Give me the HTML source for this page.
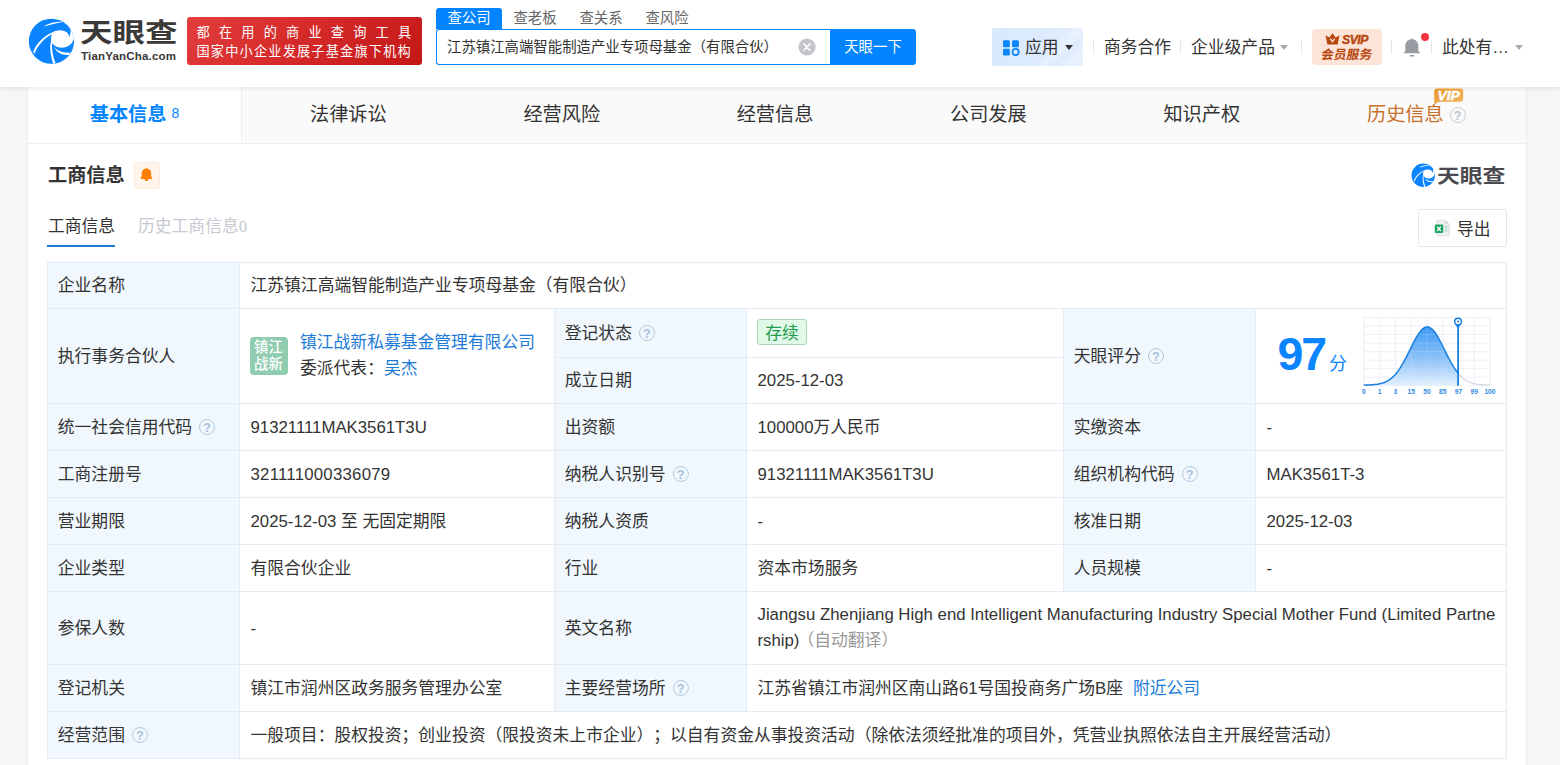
<!DOCTYPE html>
<html lang="zh-CN">
<head>
<meta charset="utf-8">
<title>天眼查</title>
<style>
*{box-sizing:border-box;margin:0;padding:0}
html,body{width:1560px;height:765px;overflow:hidden;background:#f6f6f6}
body{text-spacing-trim:space-all;font-family:"Liberation Sans","Noto Sans CJK SC",sans-serif;color:#333;font-size:16.8px;position:relative}
.abs{position:absolute;white-space:nowrap}
a{color:#1c7bd9;text-decoration:none}
/* header */
#hd{position:absolute;left:0;top:0;width:1560px;height:87px;background:#fff;box-shadow:0 1px 6px rgba(0,0,0,.10);z-index:5}
#logo-t{left:79.5px;top:13px;font-size:26px;line-height:40px;font-weight:700;color:#3b3838;transform:scaleX(1.25);transform-origin:0 0}
#logo-s{left:81px;top:48.5px;font-size:11.5px;line-height:14px;font-weight:700;color:#3b3838;letter-spacing:.2px}
#banner{left:187px;top:17px;width:235px;height:48px;border-radius:3px;background:linear-gradient(135deg,#e23d3d 0%,#d62b2b 45%,#c41818 100%);color:#fff;font-size:14.4px}
#banner div{position:absolute;left:9.5px;white-space:nowrap;line-height:20px}
.stab{top:8px;width:66px;height:21px;line-height:21.4px;font-size:14.4px;color:#666;text-align:center}
.stab.on{background:#0084ff;color:#fff;border-radius:3px 3px 0 0}
#sbox{left:436px;top:29px;width:395px;height:36px;border:1px solid #0084ff;border-right:0;border-radius:3px 0 0 3px;background:#fff}
#stext{left:447px;top:29px;line-height:36px;font-size:14.4px;color:#333}
#sbtn{left:830px;top:29px;width:86px;height:36px;background:#0084ff;color:#fff;border-radius:0 3px 3px 0;font-size:14.4px;line-height:36px;text-align:center}
.nav{top:30.2px;line-height:36px;font-size:16.8px;color:#333}
.sep{top:40px;width:1px;height:14px;background:#e6e6e6}
.tri{width:0;height:0;border-left:4px solid transparent;border-right:4px solid transparent;border-top:5px solid #333;top:45px}
/* tabs */
#wrap{left:27px;top:87px;width:1500px;height:700px;background:#fff;border-left:1px solid #ebebeb;border-right:1px solid #ebebeb}
#tabs{left:28px;top:87px;width:1498px;height:57px;background:#fafafa;border-bottom:1px solid #eee}
.tab{top:87px;width:213.33px;height:56px;line-height:56.4px;text-align:center;font-size:19.2px;color:#333}
.tab.on{background:#fff;color:#0084ff;font-weight:700;border-right:1px solid #eee;height:56px;width:214px}
/* table */
.c{line-height:24px;padding-top:1.8px;position:absolute;border-right:1px solid #e3ecf4;border-bottom:1px solid #e3ecf4;font-size:16.8px;color:#333;white-space:nowrap;padding-left:10.5px;display:flex;align-items:center}
.c.l{background:#f0f7fd;padding-left:9.8px}
.q{display:inline-block;width:16px;height:16px;border:1.5px solid #b5cce1;border-radius:50%;color:#a6c2db;font-size:12.6px;line-height:16.2px;text-align:center;margin-left:7px;font-family:"Liberation Sans",sans-serif;flex:none;position:relative;top:-1.2px;font-weight:700;overflow:hidden}
</style>
</head>
<body>
<div id="hd">
  <svg class="abs" style="left:24px;top:12px" width="60" height="60" viewBox="0 0 60 60">
    <defs><clipPath id="lc"><circle cx="27.45" cy="29.25" r="22.6"/></clipPath></defs>
    <circle cx="27.45" cy="29.25" r="22.6" fill="#0a84ff"/>
    <g clip-path="url(#lc)" fill="#fff">
      <path d="M28.6 20.5C32 17.6 40 17 43.5 21C44.8 22.6 45.3 24 45.1 25.2C46.3 23 46.9 20 46.3 17L53 15L53 27L49.8 27C48.5 32 43 36 37.6 35.7C33 35.5 29 33 27.1 29.4C26.8 26 27.3 23 28.6 20.5Z"/>
      <path d="M19.8 14.6C23 11.8 32 9.2 39.8 10C33 10.9 26 12.8 19.8 14.6Z"/>
      <path d="M9.1 40.2C12 32 19.5 24 28.8 20.3L29.2 21.4C20.5 25.6 13.5 33.5 10.4 41.8Z"/>
      <path d="M27 29.2C25.2 36 26.8 44.5 29.4 52L31.6 51.2C28.6 43.5 27.4 36 28.3 30.8Z"/>
      <path d="M29.9 34.2C32.5 38.6 39 41.2 46.6 40.6L45 42.9C38 43.4 32 40.5 29.9 34.2Z"/>
    </g>
  </svg>
  <div class="abs" id="logo-t">天眼查</div>
  <div class="abs" id="logo-s">TianYanCha.com</div>
  <div class="abs" id="banner">
    <div style="top:5.9px;letter-spacing:9.2px;font-size:13.2px">都在用的商业查询工具</div>
    <div style="top:24.6px;letter-spacing:1.17px;font-size:13.2px">国家中小企业发展子基金旗下机构</div>
  </div>
  <div class="abs stab on" style="left:436px">查公司</div>
  <div class="abs stab" style="left:502px">查老板</div>
  <div class="abs stab" style="left:568px">查关系</div>
  <div class="abs stab" style="left:634px">查风险</div>
  <div class="abs" id="sbox"></div>
  <div class="abs" id="stext">江苏镇江高端智能制造产业专项母基金（有限合伙）</div>
  <svg class="abs" style="left:798px;top:38px" width="18" height="18" viewBox="0 0 18 18"><circle cx="9" cy="9" r="8.6" fill="#c3c5cb"/><path d="M5.8 5.8L12.2 12.2M12.2 5.8L5.8 12.2" stroke="#fff" stroke-width="1.5" stroke-linecap="round"/></svg>
  <div class="abs" id="sbtn">天眼一下</div>

  <div class="abs" style="left:992px;top:28px;width:91px;height:38px;border-radius:2.5px;background:linear-gradient(135deg,rgba(255,255,255,0) 58%,rgba(255,255,255,.28) 70%,rgba(215,228,250,.25) 78%,rgba(255,255,255,.3) 88%,rgba(225,235,252,.2) 100%),linear-gradient(100deg,#d9e9fd 0%,#dcebfd 55%,#e3eefe 100%)"></div>
  <svg class="abs" style="left:1002.8px;top:39.5px" width="17" height="16" viewBox="0 0 17 16"><rect x="0" y="0.2" width="6.8" height="7" rx="1.3" fill="#0a84ff"/><rect x="9.1" y="0.2" width="6.8" height="7" rx="1.3" fill="#0a84ff"/><rect x="0" y="8.7" width="6.8" height="6.8" rx="1.3" fill="#0a84ff"/><circle cx="12.6" cy="12" r="3.1" fill="none" stroke="#0a84ff" stroke-width="1.7"/></svg>
  <div class="abs nav" style="left:1025px">应用</div>
  <div class="abs tri" style="left:1065px"></div>
  <div class="abs sep" style="left:1093px"></div>
  <div class="abs nav" style="left:1104px">商务合作</div>
  <div class="abs sep" style="left:1180px"></div>
  <div class="abs nav" style="left:1191px">企业级产品</div>
  <div class="abs tri" style="left:1280px;border-top-color:#aaa"></div>
  <div class="abs sep" style="left:1301px"></div>
  <div class="abs" style="left:1312px;top:29px;width:69.5px;height:36px;border-radius:4px;background:#fde4d8"></div>
  <svg class="abs" style="left:1325px;top:33px" width="15" height="12" viewBox="0 0 15 12"><path d="M0.5 2.2L4.2 4.6L7.5 0.3L10.8 4.6L14.5 2.2L12.6 11.5H2.4Z" fill="#b8470f"/><path d="M5.3 5.6L7.5 8.6L9.7 5.6" stroke="#fde3d6" stroke-width="1.3" fill="none"/></svg>
  <div class="abs" style="left:1342px;top:32.6px;font-size:12.2px;line-height:14px;font-weight:700;font-style:italic;color:#b8470f;letter-spacing:-.5px;-webkit-text-stroke:.45px #b8470f">SVIP</div>
  <div class="abs" style="left:1320.5px;top:47.6px;font-size:12.6px;line-height:15px;font-weight:700;color:#b8470f;letter-spacing:.2px;transform:skewX(-10deg)">会员服务</div>
  <div class="abs sep" style="left:1391px"></div>
  <svg class="abs" style="left:1402px;top:36px" width="20" height="22" viewBox="0 0 20 22"><path d="M9.8 1.8L10.5 3.2C14 3.6 16.3 6.3 16.3 9.8V15.4L18 15.9V17.3H1.9V15.9L3.3 15.4V9.8C3.3 6.3 5.6 3.6 9.1 3.2Z" fill="#989ba1"/><rect x="7.5" y="19.1" width="4.7" height="1.5" rx=".5" fill="#989ba1"/></svg>
  <div class="abs" style="left:1421px;top:33px;width:8px;height:8px;border-radius:50%;background:#f5333f"></div>
  <div class="abs sep" style="left:1431px"></div>
  <div class="abs nav" style="left:1442px">此处有…</div>
  <div class="abs tri" style="left:1515px;border-top-color:#aaa"></div>
</div>

<div class="abs" id="wrap"></div>
<div class="abs" id="tabs"></div>
<div class="abs tab on" style="left:28px">基本信息<span style="font-size:14px;font-weight:400;margin-left:5px;position:relative;top:-2.6px">8</span></div>
<div class="abs tab" style="left:241.7px">法律诉讼</div>
<div class="abs tab" style="left:455.1px">经营风险</div>
<div class="abs tab" style="left:668.4px">经营信息</div>
<div class="abs tab" style="left:881.7px">公司发展</div>
<div class="abs tab" style="left:1095.1px">知识产权</div>
<div class="abs tab" style="left:1312px;color:#c8702a;text-align:left;padding-left:55px">历史信息</div>

<svg class="abs" style="left:1433px;top:87px;z-index:6" width="32" height="20" viewBox="0 0 32 20">
  <defs><linearGradient id="vg" x1="0" y1="0" x2="1" y2="1"><stop offset="0" stop-color="#e8962e"/><stop offset="1" stop-color="#f2b865"/></linearGradient></defs>
  <path d="M4.2 1.6H27.2Q30.2 1.6 30.2 4.6V11.8Q30.2 14.8 27.2 14.8H6.5C4.5 15 2.4 16.5 1.2 18.6V4.6Q1.2 1.6 4.2 1.6Z" fill="url(#vg)"/>
  <text x="15.6" y="13" text-anchor="middle" font-family="Liberation Sans,sans-serif" font-size="13.2" font-weight="700" font-style="italic" fill="#fff" stroke="#fff" stroke-width=".5" textLength="22" lengthAdjust="spacingAndGlyphs">VIP</text>
</svg>
<div class="abs" style="left:1449.5px;top:106.8px;width:16px;height:16px;border:1.5px solid #c6cdd4;border-radius:50%;color:#bcc5ce;font-size:12.6px;line-height:16.2px;text-align:center;font-weight:700;font-family:'Liberation Sans',sans-serif;overflow:hidden">?</div>

<!-- section head -->
<div class="abs" style="left:48px;top:163px;font-size:19.2px;line-height:26px;font-weight:700;color:#333">工商信息</div>
<div class="abs" style="left:134px;top:162px;width:26px;height:27px;border:1px solid #fcead9;border-radius:3px;background:#fff5ec"></div>
<svg class="abs" style="left:136px;top:164px" width="20" height="20" viewBox="0 0 20 20"><path d="M10.45 3.5L10.95 4.5C13.6 4.9 15.2 7 15.2 9.6V12.6L16.3 14V14.9H4.6V14L5.7 12.6V9.6C5.7 7 7.3 4.9 9.95 4.5ZM8.5 14.8H12.4C12.3 16.3 11.4 17.1 10.45 17.1C9.5 17.1 8.6 16.3 8.5 14.8Z" fill="#ff8000"/></svg>

<svg class="abs" style="left:1408.5px;top:159.9px" width="31.2" height="31.2" viewBox="0 0 60 60">
  <circle cx="27.45" cy="29.25" r="22.6" fill="#0a84ff"/>
  <g clip-path="url(#lc)" fill="#fff">
    <path d="M28.6 20.5C32 17.6 40 17 43.5 21C44.8 22.6 45.3 24 45.1 25.2C46.3 23 46.9 20 46.3 17L53 15L53 27L49.8 27C48.5 32 43 36 37.6 35.7C33 35.5 29 33 27.1 29.4C26.8 26 27.3 23 28.6 20.5Z"/>
    <path d="M19.8 14.6C23 11.8 32 9.2 39.8 10C33 10.9 26 12.8 19.8 14.6Z"/>
    <path d="M9.1 40.2C12 32 19.5 24 28.8 20.3L29.2 21.4C20.5 25.6 13.5 33.5 10.4 41.8Z"/>
    <path d="M27 29.2C25.2 36 26.8 44.5 29.4 52L31.6 51.2C28.6 43.5 27.4 36 28.3 30.8Z"/>
    <path d="M29.9 34.2C32.5 38.6 39 41.2 46.6 40.6L45 42.9C38 43.4 32 40.5 29.9 34.2Z"/>
  </g>
</svg>
<div class="abs" style="left:1437px;top:161.8px;font-size:19px;line-height:30px;font-weight:700;color:#4a4a4f;transform:scaleX(1.2);transform-origin:0 0">天眼查</div>

<div class="abs" style="left:48px;top:215.3px;font-size:16.8px;line-height:24px;color:#333">工商信息</div>
<div class="abs" style="left:47px;top:244.6px;width:68px;height:2.4px;background:#1f7acc"></div>
<div class="abs" style="left:138px;top:215.3px;font-size:16.8px;line-height:24px;color:#c6c9d1">历史工商信息<span style="font-family:'Liberation Serif',serif">0</span></div>

<div class="abs" style="left:1418px;top:209px;width:89px;height:38px;border:1px solid #e6e6e6;border-radius:3px;background:#fff"></div>
<svg class="abs" style="left:1434px;top:219px" width="17" height="18" viewBox="0 0 17 18">
  <path d="M4 1.2H11.2L15.2 5.2V15.8Q15.2 16.8 14.2 16.8H4Q3 16.8 3 15.8V2.2Q3 1.2 4 1.2Z" fill="#eef0f2" stroke="#d4d8dc" stroke-width=".8"/>
  <path d="M11.2 1.2V5.2H15.2Z" fill="#d4d8dc"/>
  <rect x="0.8" y="5.6" width="8.4" height="8.4" rx="1" fill="#21a366"/>
  <path d="M3.2 7.6L6.8 12M6.8 7.6L3.2 12" stroke="#fff" stroke-width="1.3"/>
  <path d="M10.6 7.6H13.4M10.6 9.8H13.4M10.6 12H13.4" stroke="#9fd8b9" stroke-width="1"/>
</svg>
<div class="abs" style="left:1457px;top:218.3px;font-size:16.8px;line-height:24px;color:#333">导出</div>

<!-- table -->
<div id="tb" class="abs" style="left:47px;top:262px;width:1460px;height:497px;border-left:1px solid #e3ecf4;border-top:1px solid #e3ecf4"></div>
<div class="c l" style="left:48px;top:263px;width:192px;height:46px;">企业名称</div>
<div class="c" style="left:240px;top:263px;width:1267px;height:46px;">江苏镇江高端智能制造产业专项母基金（有限合伙）</div>
<div class="c l" style="left:48px;top:309px;width:192px;height:95px;">执行事务合伙人</div>
<div class="c" style="left:240px;top:309px;width:315px;height:95px;"><div style="width:38px;height:38px;border-radius:4px;background:#8fccb0;color:#fff;font-size:14.4px;line-height:16.5px;text-align:center;padding-top:2.5px;flex:none;position:relative;left:-1px;top:-1.4px;font-weight:500">镇江<br>战新</div><div style="margin-left:11.5px;line-height:26px;position:relative;top:-.6px"><a>镇江战新私募基金管理有限公司</a><br>委派代表：<a>吴杰</a></div></div>
<div class="c l" style="left:555px;top:309px;width:192px;height:49px;">登记状态<span class="q">?</span></div>
<div class="c" style="left:747px;top:309px;width:317px;height:49px;"><span style="display:inline-block;border:1px solid #a9d7b8;background:#e1f9e8;color:#1e9a4e;border-radius:3px;padding:1.5px 7.3px 0 7.7px;line-height:23px;height:26px;position:relative;top:-1.9px;left:-1px">存续</span></div>
<div class="c l" style="left:555px;top:358px;width:192px;height:46px;">成立日期</div>
<div class="c" style="left:747px;top:358px;width:317px;height:46px;">2025-12-03</div>
<div class="c l" style="left:1064px;top:309px;width:192px;height:95px;">天眼评分<span class="q">?</span></div>
<div class="c" style="left:1256px;top:309px;width:251px;height:95px;"><span id="score"></span></div>
<div class="c l" style="left:48px;top:404px;width:192px;height:47px;">统一社会信用代码<span class="q">?</span></div>
<div class="c" style="left:240px;top:404px;width:315px;height:47px;">91321111MAK3561T3U</div>
<div class="c l" style="left:555px;top:404px;width:192px;height:47px;">出资额</div>
<div class="c" style="left:747px;top:404px;width:317px;height:47px;">100000万人民币</div>
<div class="c l" style="left:1064px;top:404px;width:192px;height:47px;">实缴资本</div>
<div class="c" style="left:1256px;top:404px;width:251px;height:47px;">-</div>
<div class="c l" style="left:48px;top:451px;width:192px;height:47px;">工商注册号</div>
<div class="c" style="left:240px;top:451px;width:315px;height:47px;"><span style="letter-spacing:.24px">321111000336079</span></div>
<div class="c l" style="left:555px;top:451px;width:192px;height:47px;">纳税人识别号<span class="q">?</span></div>
<div class="c" style="left:747px;top:451px;width:317px;height:47px;">91321111MAK3561T3U</div>
<div class="c l" style="left:1064px;top:451px;width:192px;height:47px;">组织机构代码<span class="q">?</span></div>
<div class="c" style="left:1256px;top:451px;width:251px;height:47px;">MAK3561T-3</div>
<div class="c l" style="left:48px;top:498px;width:192px;height:47px;">营业期限</div>
<div class="c" style="left:240px;top:498px;width:315px;height:47px;">2025-12-03 至 无固定期限</div>
<div class="c l" style="left:555px;top:498px;width:192px;height:47px;">纳税人资质</div>
<div class="c" style="left:747px;top:498px;width:317px;height:47px;">-</div>
<div class="c l" style="left:1064px;top:498px;width:192px;height:47px;">核准日期</div>
<div class="c" style="left:1256px;top:498px;width:251px;height:47px;">2025-12-03</div>
<div class="c l" style="left:48px;top:545px;width:192px;height:47px;">企业类型</div>
<div class="c" style="left:240px;top:545px;width:315px;height:47px;">有限合伙企业</div>
<div class="c l" style="left:555px;top:545px;width:192px;height:47px;">行业</div>
<div class="c" style="left:747px;top:545px;width:317px;height:47px;">资本市场服务</div>
<div class="c l" style="left:1064px;top:545px;width:192px;height:47px;">人员规模</div>
<div class="c" style="left:1256px;top:545px;width:251px;height:47px;">-</div>
<div class="c l" style="left:48px;top:592px;width:192px;height:73px;">参保人数</div>
<div class="c" style="left:240px;top:592px;width:315px;height:73px;">-</div>
<div class="c l" style="left:555px;top:592px;width:192px;height:73px;">英文名称</div>
<div class="c" style="left:747px;top:592px;width:760px;height:73px;"><div style="white-space:normal;word-break:break-all;line-height:25.8px;width:742px;position:relative;top:-.8px">Jiangsu Zhenjiang High end Intelligent Manufacturing Industry Special Mother Fund (Limited Partnership)<span style="color:#999;margin-left:-2px">（自动翻译）</span></div></div>
<div class="c l" style="left:48px;top:665px;width:192px;height:47px;">登记机关</div>
<div class="c" style="left:240px;top:665px;width:315px;height:47px;">镇江市润州区政务服务管理办公室</div>
<div class="c l" style="left:555px;top:665px;width:192px;height:47px;">主要经营场所<span class="q">?</span></div>
<div class="c" style="left:747px;top:665px;width:760px;height:47px;">江苏省镇江市润州区南山路61号国投商务广场B座<a style="margin-left:10px">附近公司</a></div>
<div class="c l" style="left:48px;top:712px;width:192px;height:47px;">经营范围<span class="q">?</span></div>
<div class="c" style="left:240px;top:712px;width:1267px;height:47px;">一般项目：股权投资；创业投资（限投资未上市企业）；以自有资金从事投资活动（除依法须经批准的项目外，凭营业执照依法自主开展经营活动）</div>
<svg class="abs" style="left:1355px;top:310px" width="150" height="92" viewBox="1355 310 150 92">
  <defs><linearGradient id="cg" x1="0" y1="0" x2="0" y2="1"><stop offset="0" stop-color="#3d9af5"/><stop offset=".55" stop-color="#8fc3f8"/><stop offset="1" stop-color="#e6f1fd"/></linearGradient></defs>
  <path d="M1363.9 317.4V385.8M1379.7 317.4V385.8M1395.4 317.4V385.8M1411.2 317.4V385.8M1426.9 317.4V385.8M1442.7 317.4V385.8M1458.4 317.4V385.8M1474.2 317.4V385.8M1489.9 317.4V385.8M1363.9 317.4H1489.9M1363.9 325.9H1489.9M1363.9 334.5H1489.9M1363.9 343.1H1489.9M1363.9 351.6H1489.9M1363.9 360.1H1489.9M1363.9 368.7H1489.9M1363.9 377.2H1489.9M1363.9 385.8H1489.9" stroke="#eff3f9" stroke-width="1" fill="none"/>
  <path d="M1363.9 385.0 L1365.4 385.0 L1366.9 385.0 L1368.4 384.9 L1369.9 384.9 L1371.4 384.8 L1372.9 384.7 L1374.4 384.5 L1375.9 384.4 L1377.4 384.2 L1378.9 383.9 L1380.4 383.6 L1381.9 383.2 L1383.4 382.7 L1384.9 382.2 L1386.4 381.5 L1387.9 380.7 L1389.4 379.8 L1390.9 378.7 L1392.4 377.4 L1393.9 376.0 L1395.4 374.4 L1396.9 372.6 L1398.4 370.6 L1399.9 368.4 L1401.4 366.0 L1402.9 363.4 L1404.4 360.7 L1405.9 357.9 L1407.4 354.9 L1408.9 351.9 L1410.4 348.8 L1411.9 345.8 L1413.4 342.8 L1414.9 339.9 L1416.4 337.2 L1417.9 334.8 L1419.4 332.6 L1420.9 330.7 L1422.4 329.1 L1423.9 328.0 L1425.4 327.2 L1426.9 326.9 L1428.4 327.0 L1429.9 327.6 L1431.4 328.6 L1432.9 330.0 L1434.4 331.7 L1435.9 333.8 L1437.4 336.2 L1438.9 338.8 L1440.4 341.6 L1441.9 344.5 L1443.4 347.5 L1444.9 350.6 L1446.4 353.6 L1447.9 356.6 L1449.4 359.5 L1450.9 362.3 L1452.4 364.9 L1453.9 367.4 L1455.4 369.7 L1456.9 371.7 L1458.1 373.3 L1458.1 385.8 L1363.9 385.8Z" fill="url(#cg)"/>
  <path d="M1363.9 317.4V385.8M1379.7 317.4V385.8M1395.4 317.4V385.8M1411.2 317.4V385.8M1426.9 317.4V385.8M1442.7 317.4V385.8M1458.4 317.4V385.8M1474.2 317.4V385.8M1489.9 317.4V385.8M1363.9 317.4H1489.9M1363.9 325.9H1489.9M1363.9 334.5H1489.9M1363.9 343.1H1489.9M1363.9 351.6H1489.9M1363.9 360.1H1489.9M1363.9 368.7H1489.9M1363.9 377.2H1489.9M1363.9 385.8H1489.9" stroke="#dbe8f7" stroke-width=".6" fill="none" opacity=".3"/>
  <path d="M1458.1 373.3 L1459.6 375.0 L1461.1 376.5 L1462.6 377.9 L1464.1 379.1 L1465.6 380.1 L1467.1 381.0 L1468.6 381.8 L1470.1 382.4 L1471.6 382.9 L1473.1 383.4 L1474.6 383.7 L1476.1 384.0 L1477.6 384.3 L1479.1 384.5 L1480.6 384.6 L1482.1 384.7 L1483.6 384.8 L1485.1 384.9 L1486.6 384.9 L1488.1 385.0 L1489.6 385.0 L1489.9 385.0" stroke="#cfd6dd" stroke-width="1.2" fill="none"/>
  <path d="M1363.9 385.0 L1365.4 385.0 L1366.9 385.0 L1368.4 384.9 L1369.9 384.9 L1371.4 384.8 L1372.9 384.7 L1374.4 384.5 L1375.9 384.4 L1377.4 384.2 L1378.9 383.9 L1380.4 383.6 L1381.9 383.2 L1383.4 382.7 L1384.9 382.2 L1386.4 381.5 L1387.9 380.7 L1389.4 379.8 L1390.9 378.7 L1392.4 377.4 L1393.9 376.0 L1395.4 374.4 L1396.9 372.6 L1398.4 370.6 L1399.9 368.4 L1401.4 366.0 L1402.9 363.4 L1404.4 360.7 L1405.9 357.9 L1407.4 354.9 L1408.9 351.9 L1410.4 348.8 L1411.9 345.8 L1413.4 342.8 L1414.9 339.9 L1416.4 337.2 L1417.9 334.8 L1419.4 332.6 L1420.9 330.7 L1422.4 329.1 L1423.9 328.0 L1425.4 327.2 L1426.9 326.9 L1428.4 327.0 L1429.9 327.6 L1431.4 328.6 L1432.9 330.0 L1434.4 331.7 L1435.9 333.8 L1437.4 336.2 L1438.9 338.8 L1440.4 341.6 L1441.9 344.5 L1443.4 347.5 L1444.9 350.6 L1446.4 353.6 L1447.9 356.6 L1449.4 359.5 L1450.9 362.3 L1452.4 364.9 L1453.9 367.4 L1455.4 369.7 L1456.9 371.7 L1458.1 373.3" stroke="#1a7fe0" stroke-width="1.5" fill="none" stroke-linejoin="round"/>
  <path d="M1458.1 326V385.8" stroke="#1a7fe0" stroke-width="1.8"/>
  <path d="M1458.1 328.6C1456.5 326 1454.0 324.3 1454.0 321.5A4.1 4.1 0 1 1 1462.2 321.5C1462.2 324.3 1459.7 326 1458.1 328.6Z" fill="#1a7fe0"/>
  <circle cx="1458.1" cy="321.5" r="2.6" fill="#fff"/><circle cx="1458.1" cy="321.5" r="1.1" fill="#1a7fe0"/>
  <g font-family="Liberation Sans,sans-serif" font-size="6.6" font-weight="700" fill="#2b88e3"><text x="1363.9" y="394.4" text-anchor="middle">0</text><text x="1379.7" y="394.4" text-anchor="middle">1</text><text x="1395.4" y="394.4" text-anchor="middle">3</text><text x="1411.2" y="394.4" text-anchor="middle">15</text><text x="1426.9" y="394.4" text-anchor="middle">50</text><text x="1442.7" y="394.4" text-anchor="middle">85</text><text x="1458.4" y="394.4" text-anchor="middle">97</text><text x="1474.2" y="394.4" text-anchor="middle">99</text><text x="1489.9" y="394.4" text-anchor="middle">100</text></g>
</svg>
<div class="abs" style="left:1277.5px;top:326px;font-size:46.5px;line-height:56px;font-weight:700;color:#0a84ff;letter-spacing:-2px">97</div>
<div class="abs" style="left:1329px;top:351.5px;font-size:18px;line-height:24px;color:#0a84ff">分</div>

</body>
</html>
